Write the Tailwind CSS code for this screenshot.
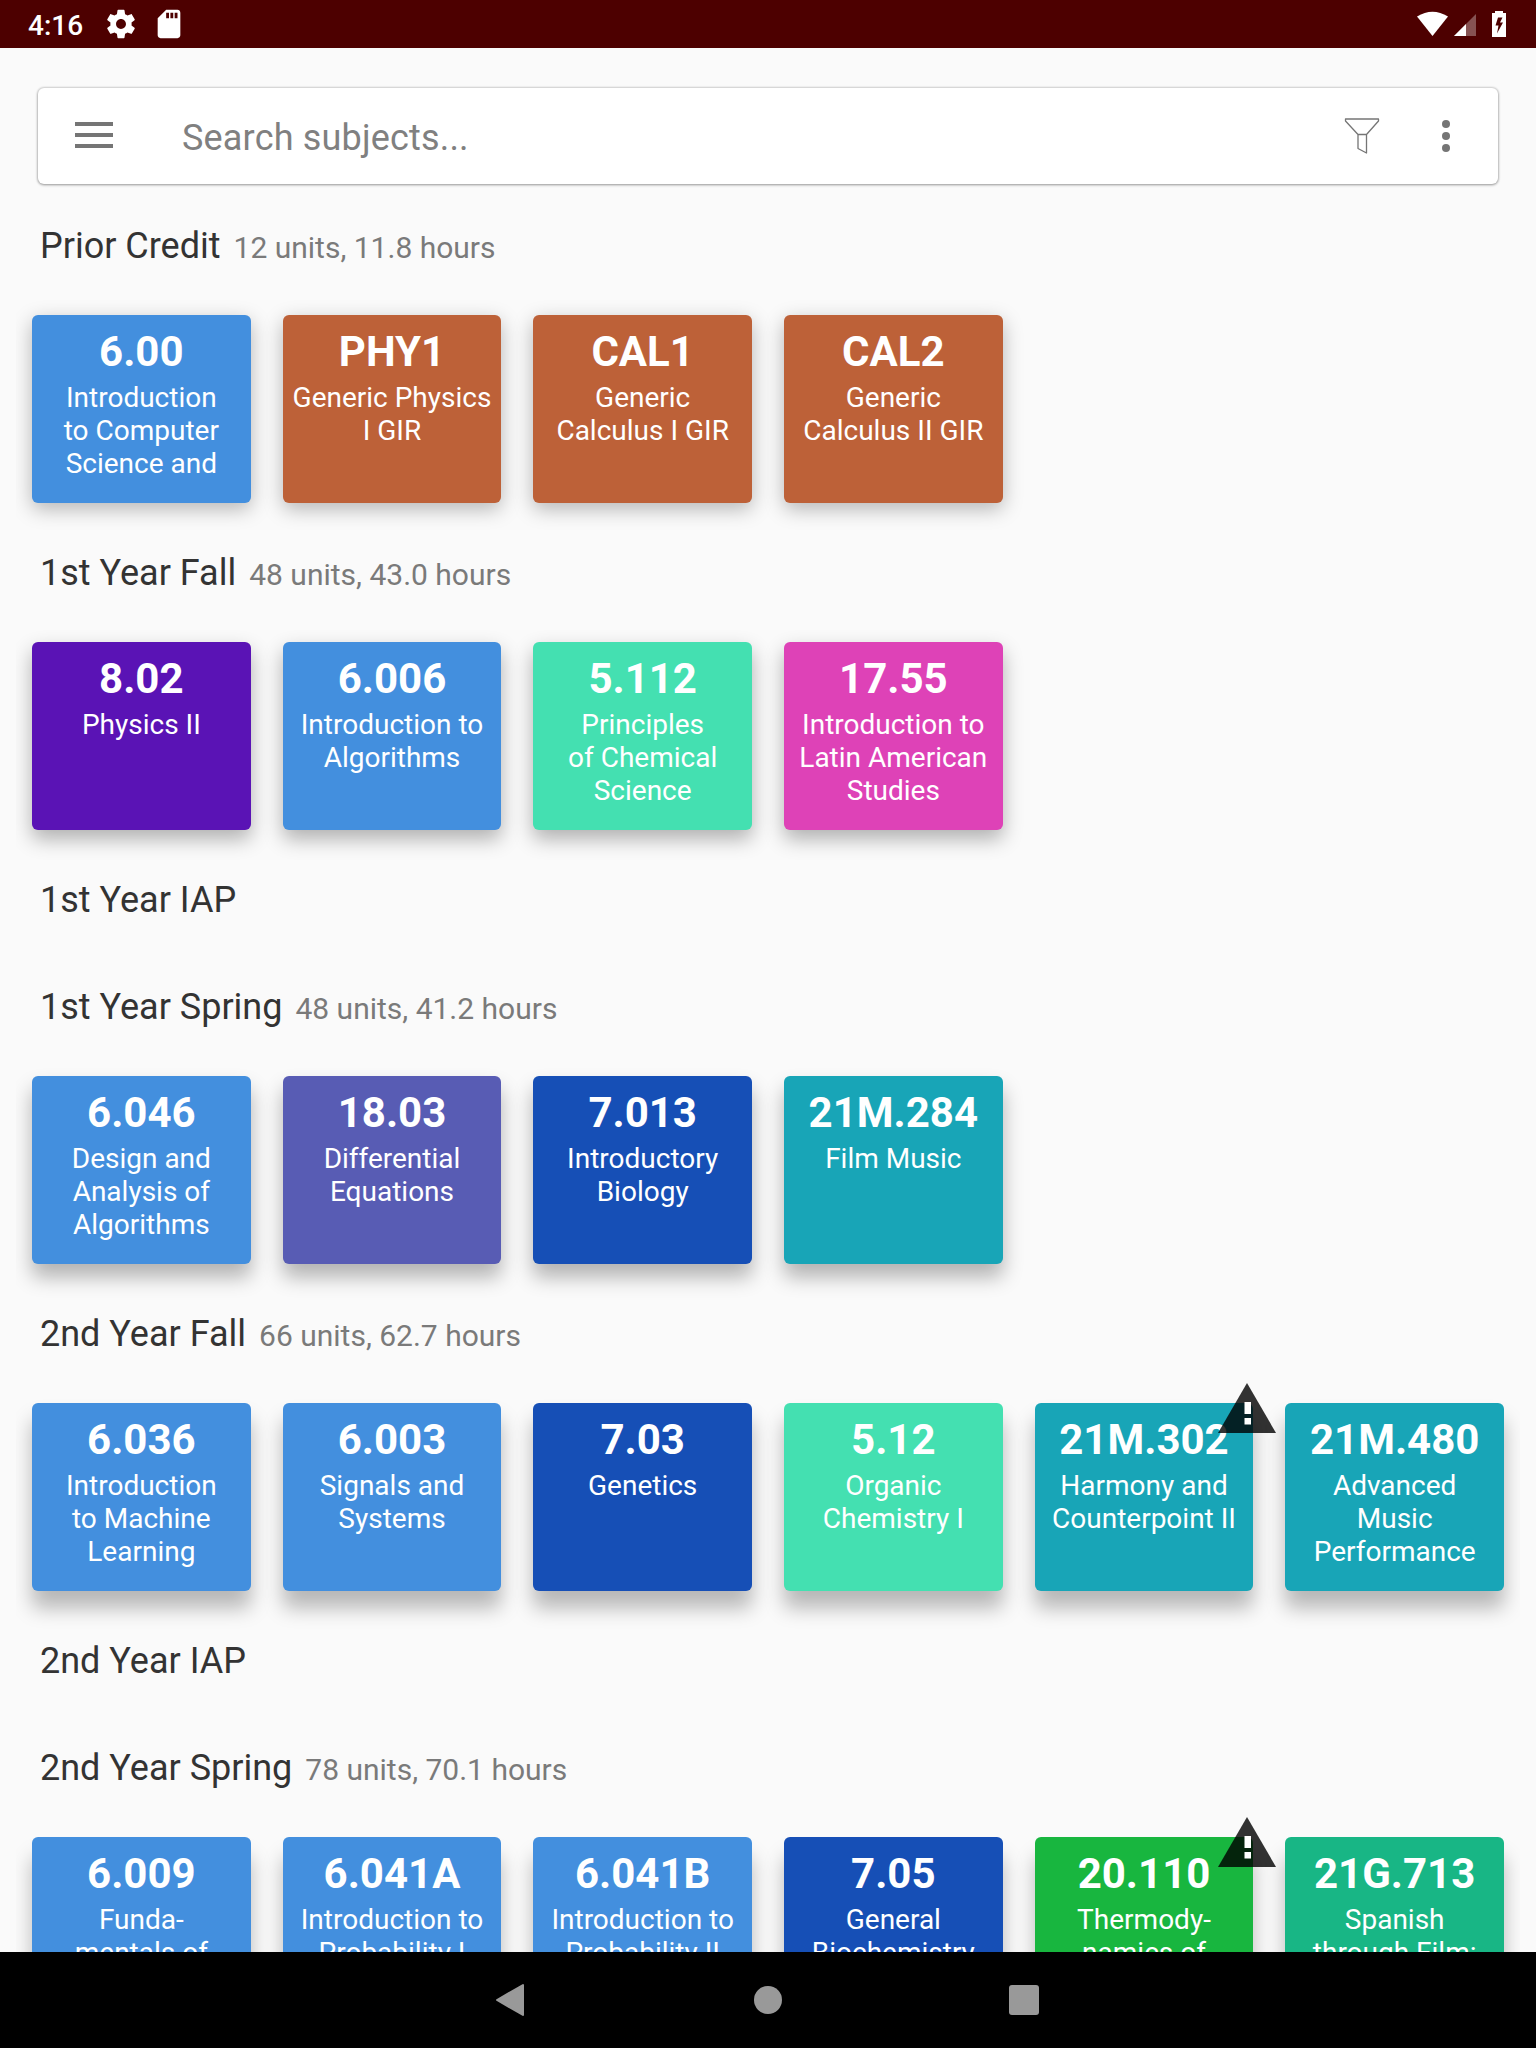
<!DOCTYPE html>
<html lang="en">
<head>
<meta charset="utf-8">
<title>Road</title>
<script src="https://cdn.jsdelivr.net/npm/@tailwindcss/browser@4"></script>
</head>
<body class="bg-[#fafafa]">
<div class="flex h-[2048px] w-[1536px] flex-col overflow-hidden bg-[#fafafa] font-['Roboto',sans-serif]">
  <header class="flex h-12 shrink-0 items-center bg-[#4d0000] text-white">
    <span class="ml-7 w-[76px] text-[28px] leading-[48px] font-medium pt-[3px]">4:16</span>
    <svg class="size-[34px]" viewBox="0 0 24 24" fill="currentColor"><path d="M19.43 12.98c.04-.32.07-.64.07-.98s-.03-.66-.07-.98l2.11-1.65c.19-.15.24-.42.12-.64l-2-3.46c-.12-.22-.39-.3-.61-.22l-2.49 1c-.52-.4-1.08-.73-1.69-.98l-.38-2.65C14.46 2.18 14.25 2 14 2h-4c-.25 0-.46.18-.49.42l-.38 2.65c-.61.25-1.17.59-1.69.98l-2.49-1c-.23-.09-.49 0-.61.22l-2 3.46c-.13.22-.07.49.12.64l2.11 1.65c-.04.32-.07.65-.07.98s.03.66.07.98l-2.11 1.65c-.19.15-.24.42-.12.64l2 3.46c.12.22.39.3.61.22l2.49-1c.52.4 1.08.73 1.69.98l.38 2.65c.03.24.24.42.49.42h4c.25 0 .46-.18.49-.42l.38-2.65c.61-.25 1.17-.59 1.69-.98l2.49 1c.23.09.49 0 .61-.22l2-3.46c.12-.22.07-.49-.12-.64l-2.11-1.65zM12 15.5c-1.93 0-3.5-1.57-3.5-3.5s1.57-3.5 3.5-3.5 3.5 1.57 3.5 3.5-1.57 3.5-3.5 3.5z"/></svg>
    <svg class="ml-[14px] size-[34px]" viewBox="0 0 24 24" fill="currentColor"><path d="M18 2h-8L4.02 8 4 20c0 1.1.9 2 2 2h12c1.1 0 2-.9 2-2V4c0-1.1-.9-2-2-2zm-6 6h-2V4h2v4zm3 0h-2V4h2v4zm3 0h-2V4h2v4z"/></svg>
    <svg class="ml-auto mr-[28px] h-12 w-[92px]" viewBox="0 0 92 48" fill="currentColor"><path d="M1 16.500Q16.500 7 32 16.500L16.500 36Z"/><path d="M60 14V36H38Z" opacity=".32"/><path d="M50 24V36H38Z"/><path fill-rule="evenodd" d="M79 11H87V13H90V37H76V13H79ZM82 17.500L79.500 25.500H82.500L81 33.500L87 22.500H84L86.500 17.500Z"/></svg>
  </header>

  <div class="mx-[38px] mt-10 flex h-24 shrink-0 items-center rounded-md bg-white text-[#757575] shadow-[0_1px_3px_rgba(0,0,0,0.3),0_0_2px_1px_rgba(0,0,0,0.14)]">
    <svg class="ml-[37px] h-7 w-[38px]" viewBox="0 0 38 28" fill="currentColor"><path d="M0 0H38V4H0ZM0 11H38V15H0ZM0 22H38V26H0Z"/></svg>
    <span class="ml-[69px] text-[36px] leading-[44px] tracking-[0.18px] pt-[3px] text-[#808080]">Search subjects...</span>
    <svg class="ml-auto h-9 w-9" viewBox="0 0 36 36" fill="none" stroke="currentColor" stroke-width="1.300" stroke-linejoin="round"><path d="M1.500 1H34.500V3L22.500 16.500H14L1.500 3ZM14 16.500V30.500L22.500 35V16.500"/></svg>
    <svg class="ml-[62px] mr-[48px] h-8 w-2" viewBox="0 0 8 32" fill="currentColor"><circle cx="4" cy="4" r="4"/><circle cx="4" cy="16" r="4"/><circle cx="4" cy="28" r="4"/></svg>
  </div>

  <main id="road" class="mx-4 mt-6 min-h-0 flex-1 overflow-hidden"></main>

  <footer class="flex h-24 shrink-0 items-center justify-center bg-black text-[#999]">
    <svg class="h-10 w-[544px]" viewBox="0 0 544 40" fill="currentColor"><path d="M1 20L27 5V35Z" stroke="currentColor" stroke-width="2" stroke-linejoin="round"/><circle cx="272" cy="20" r="14"/><rect x="513" y="5" width="30" height="30" rx="3"/></svg>
  </footer>
</div>

<script>
const blue = '#438fde', rust = '#bd6138', navy = '#164fb6', mint = '#44e0b1', teal = '#18a5b7';
const shadows = [
  'shadow-[0_6px_20px_rgba(0,0,0,0.28)]',
  'shadow-[0_9px_20px_rgba(0,0,0,0.30)]',
  'shadow-[0_13px_20px_rgba(0,0,0,0.29)]',
  'shadow-[0_17px_20px_rgba(0,0,0,0.27)]',
  'shadow-[0_20px_20px_rgba(0,0,0,0.26)]'
];
const semesters = [
  ['Prior Credit', '12 units, 11.8 hours', [
    ['6.00', 'Introduction|to Computer|Science and', blue], ['PHY1', 'Generic Physics|I GIR', rust],
    ['CAL1', 'Generic|Calculus I GIR', rust], ['CAL2', 'Generic|Calculus II GIR', rust]]],
  ['1st Year Fall', '48 units, 43.0 hours', [
    ['8.02', 'Physics II', '#5a13b5'], ['6.006', 'Introduction to|Algorithms', blue],
    ['5.112', 'Principles|of Chemical|Science', mint], ['17.55', 'Introduction to|Latin American|Studies', '#de42b7']]],
  ['1st Year IAP', '', []],
  ['1st Year Spring', '48 units, 41.2 hours', [
    ['6.046', 'Design and|Analysis of|Algorithms', blue], ['18.03', 'Differential|Equations', '#585cb4'],
    ['7.013', 'Introductory|Biology', navy], ['21M.284', 'Film Music', teal]]],
  ['2nd Year Fall', '66 units, 62.7 hours', [
    ['6.036', 'Introduction|to Machine|Learning', blue], ['6.003', 'Signals and|Systems', blue],
    ['7.03', 'Genetics', navy], ['5.12', 'Organic|Chemistry I', mint],
    ['21M.302', 'Harmony and|Counterpoint II', teal, true], ['21M.480', 'Advanced|Music|Performance', teal]]],
  ['2nd Year IAP', '', []],
  ['2nd Year Spring', '78 units, 70.1 hours', [
    ['6.009', 'Funda-|mentals of', blue], ['6.041A', 'Introduction to|Probability I', blue],
    ['6.041B', 'Introduction to|Probability II', blue], ['7.05', 'General|Biochemistry', navy],
    ['20.110', 'Thermody-|namics of', '#18b63f', true], ['21G.713', 'Spanish|through Film:', '#18b685']]]
];
const warning = `<svg class="absolute -top-5 -right-[23px] h-[50px] w-[58px]" viewBox="0 0 58 50"><path fill="#000" fill-opacity=".8" d="M29 0L58 50H0Z"/><path fill="#fff" d="M26.500 19H33V31H26.500ZM26.500 35H33V41.500H26.500Z"/></svg>`;
let row = 0;
document.getElementById('road').innerHTML = semesters.map(([name, info, cards]) => {
  const shadow = cards.length ? shadows[row++] : '';
  return `<section>
    <div class="flex h-[107px] items-baseline gap-[13px] pl-6 pt-[17px]">
      <h2 class="text-[36px] leading-[42px] text-[#333]">${name}</h2>
      <p class="text-[30px] leading-[36px] text-[#7a7a7a]">${info}</p>
    </div>
    ${cards.length ? `<div class="grid grid-cols-6 gap-8 px-4 pb-8">${cards.map(([id, title, color, warn]) => `
      <div class="relative h-[188px] rounded-md pt-3 text-center text-white ${shadow}" style="background-color:${color}">
        <div class="text-[42px] leading-[50px] font-bold">${id}</div>
        <div class="mt-1 text-[28px] leading-[33px] whitespace-nowrap">${title.split('|').join('<br>')}</div>
        ${warn ? warning : ''}
      </div>`).join('')}</div>` : ''}
  </section>`;
}).join('');
</script>
</body>
</html>
